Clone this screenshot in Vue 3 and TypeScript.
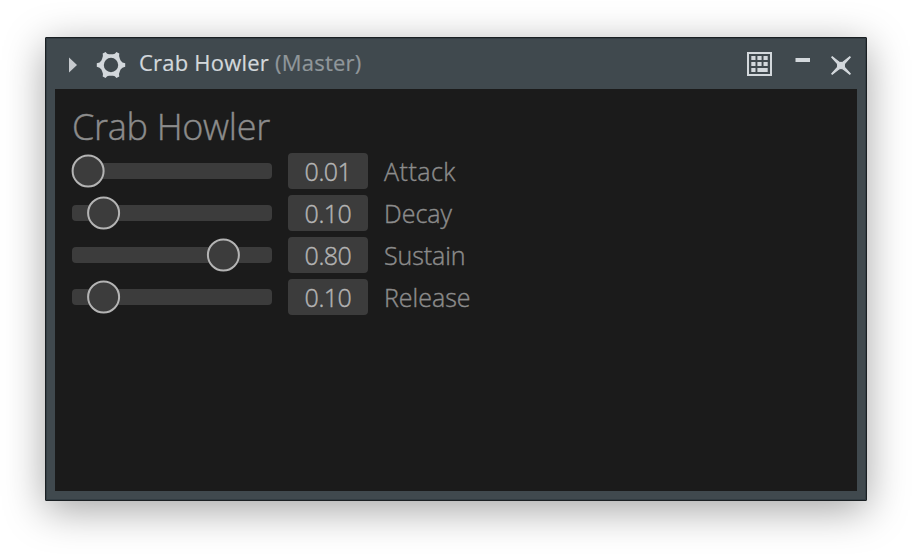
<script setup lang="ts">
interface Param {
  name: string
  value: string
  center: number
  spacing: number
}

const params: Param[] = [
  { name: 'Attack', value: '0.01', center: 16.1, spacing: 0.5 },
  { name: 'Decay', value: '0.10', center: 31.6, spacing: 0 },
  { name: 'Sustain', value: '0.80', center: 151.4, spacing: -0.1 },
  { name: 'Release', value: '0.10', center: 31.6, spacing: 0 },
]
</script>

<template>
  <main class="desktop">
    <section class="window">
      <header class="titlebar">
        <svg class="arrow" width="9" height="16" viewBox="0 0 9 16"><path d="M1 0.5 9 8 1 15.5Z" fill="#c6cace" /></svg>
        <svg class="gear" width="30" height="28" viewBox="-15 -14 30 28">
          <path
            fill="#d3d8dc"
            fill-rule="evenodd"
            d="M-8.3-11.6 -5.4-13 Q-4-10.8-2-10.8H2Q4-10.8 5.4-13L8.3-11.6Q7.6-8.6 8.8-6.6L9.6-4.6Q11-2.2 14.2-1.7V1.7Q11 2.2 9.6 4.6L8.8 6.6Q7.6 8.6 8.3 11.6L5.4 13Q4 10.8 2 10.8H-2Q-4 10.8-5.4 13L-8.3 11.6Q-7.6 8.6-8.8 6.6L-9.6 4.6Q-11 2.2-14.2 1.7V-1.7Q-11-2.2-9.6-4.6L-8.8-6.6Q-7.6-8.6-8.3-11.6ZM7.2 0A7.2 7.2 0 1 0-7.2 0A7.2 7.2 0 1 0 7.2 0Z"
          />
        </svg>
        <h1 class="title">Crab Howler <span class="track">(Master)</span></h1>
        <svg class="keypad" width="25" height="24" viewBox="0 0 25 24" fill="#d3d8dc">
          <path fill-rule="evenodd" d="M0 0H25V24H0ZM2 2V22H23V2Z" />
          <path d="M4.3 4h4.2v4h-4.2zM10.4 4h4.2v4h-4.2zM16.5 4h4.2v4h-4.2zM4.3 10h4.2v4h-4.2zM10.4 10h4.2v4h-4.2zM16.5 10h4.2v4h-4.2zM4.3 16h4.2v4h-4.2zM10.4 16h10.3v4h-10.3z" />
        </svg>
        <svg class="minimize" width="15" height="4" viewBox="0 0 15 4"><path d="M.5 0H15V4H.5z" fill="#d3d8dc" /></svg>
        <svg class="close" width="20" height="19" viewBox="0 0 20 19">
          <path
            d="M1.2 .8 7.8 6Q10 7 12.2 6L18.8 .8 19.3 1.3 13.8 7.3Q12.8 9.5 13.8 11.7L19.3 17.7 18.8 18.2 12.2 13Q10 12 7.8 13L1.2 18.2 .7 17.7 6.2 11.7Q7.2 9.5 6.2 7.3L.7 1.3Z"
            fill="#d3d8dc"
            stroke="#d3d8dc"
            stroke-width="1.1"
          />
        </svg>
      </header>
      <div class="panel">
        <h2 class="heading">Crab Howler</h2>
        <div v-for="p in params" :key="p.name" class="row">
          <svg class="slider" width="200" height="36" viewBox="0 0 200 36">
            <rect y="10" width="200" height="16" rx="4" fill="#3c3c3c" />
            <circle :cx="p.center" cy="18" r="15.5" fill="#3c3c3c" stroke="#b4b4b4" stroke-width="2" />
          </svg>
          <div class="value">{{ p.value }}</div>
          <div class="name" :style="{ letterSpacing: p.spacing + 'px' }">{{ p.name }}</div>
        </div>
      </div>
    </section>
  </main>
</template>

<style>
body {
  background: #fff;
}
</style>

<style scoped>
.desktop {
  height: 554px;
  box-sizing: border-box;
  padding: 37px 45px 53px;
  overflow: hidden;
}
.window {
  box-sizing: border-box;
  height: 464px;
  padding: 0 9px 9px;
  border: 1px solid #1b2023;
  border-radius: 1px;
  background: #40494e;
  box-shadow: inset 0 0 0 1px #333d43, 0 9px 40px rgba(0, 0, 0, 0.36);
}
.titlebar {
  display: flex;
  align-items: flex-start;
  height: 51px;
  padding: 0 6px 0 13px;
}
.arrow {
  margin-top: 19px;
}
.gear {
  margin: 13px 0 0 19px;
}
.title {
  flex: 1;
  margin: 9px 0 0 13px;
  font: 500 22px/30px 'Open Sans', 'Noto Sans', sans-serif;
  letter-spacing: 0.22px;
  color: #d3d8dc;
  -webkit-text-stroke: 0.2px currentColor;
  white-space: nowrap;
}
.track {
  color: #90979b;
}
.keypad {
  margin: 14px 23px 0 0;
}
.minimize {
  margin: 20px 21px 0 0;
}
.close {
  margin-top: 18px;
}
.panel {
  box-sizing: border-box;
  height: 402px;
  padding: 16px 17px;
  background: #1b1b1b;
}
.heading {
  margin: 0 0 4px;
  font: 300 36px/44px 'Open Sans', 'Noto Sans', sans-serif;
  letter-spacing: -0.3px;
  color: #8c8c8c;
  -webkit-text-stroke: 0.4px currentColor;
  white-space: nowrap;
}
.row {
  display: flex;
  align-items: center;
  height: 36px;
  margin-bottom: 6px;
  gap: 16px;
}
.slider {
  display: block;
  overflow: visible;
}
.value {
  width: 80px;
  height: 36px;
  border-radius: 4px;
  background: #3c3c3c;
  color: #b4b4b4;
  font: 300 25px/36px 'Open Sans', 'Noto Sans', sans-serif;
  letter-spacing: -0.5px;
  -webkit-text-stroke: 0.4px currentColor;
  text-align: center;
}
.name {
  color: #8c8c8c;
  font: 300 25px/36px 'Open Sans', 'Noto Sans', sans-serif;
  padding-bottom: 1px;
  -webkit-text-stroke: 0.4px currentColor;
}
</style>
